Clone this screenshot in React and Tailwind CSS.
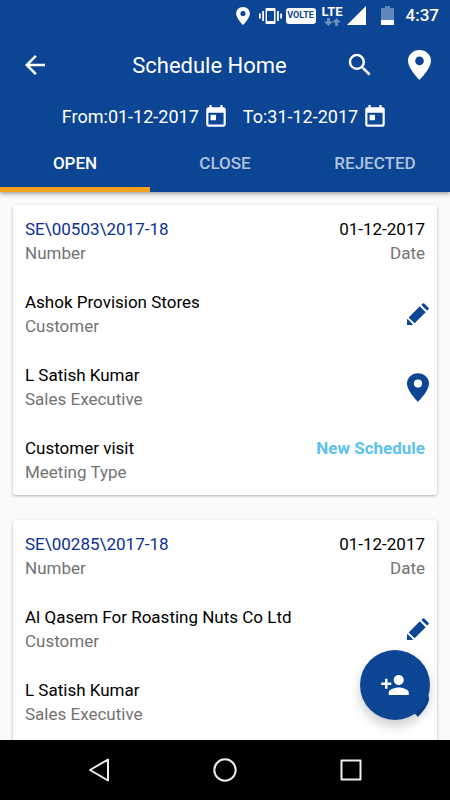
import { MdArrowBack, MdPersonAdd, MdSearch } from "react-icons/md";
import { useState } from "react";

const tabs = ["OPEN", "CLOSE", "REJECTED"];

const schedules = [
  {
    number: "SE\\00503\\2017-18",
    date: "01-12-2017",
    customer: "Ashok Provision Stores",
    executive: "L Satish Kumar",
    meetingType: "Customer visit",
    status: "New Schedule",
  },
  {
    number: "SE\\00285\\2017-18",
    date: "01-12-2017",
    customer: "Al Qasem For Roasting Nuts Co Ltd",
    executive: "L Satish Kumar",
  },
];

function IconPin({ className }) {
  return (
    <svg viewBox="0 0 23 30" className={className} fill="currentColor" aria-hidden="true">
      <path
        fillRule="evenodd"
        d="M11.5 0C5.1 0 0 4.8 0 10.8 0 18.8 11.5 30 11.5 30S23 18.8 23 10.8C23 4.8 17.9 0 11.5 0zm0 6.6a4.3 4.3 0 1 1 0 8.6 4.3 4.3 0 0 1 0-8.6z"
      />
    </svg>
  );
}

function IconPencil({ className }) {
  return (
    <svg viewBox="0 0 22 22" className={className} fill="currentColor" aria-hidden="true">
      <path d="M0 22v-5.4l.6-.6L6 21.4l-.6.6z" />
      <path d="M1.7 14.4 12.8 3.3l5.9 5.9L7.6 20.3z" />
      <path d="m14.4 1.900 1.300-1.400c.5-.5 1-.5 1.500 0l4.300 4.300c.5.5.5 1 0 1.500l-1.400 1.300z" />
    </svg>
  );
}

function IconCalendar({ className }) {
  return (
    <svg viewBox="0 0 24 24" className={className} fill="currentColor" aria-hidden="true">
      <path
        fillRule="evenodd"
        d="M19 3h-1V1h-2v2H8V1H6v2H5c-1.1 0-2 .9-2 2v14c0 1.1.9 2 2 2h14c1.1 0 2-.9 2-2V5c0-1.1-.9-2-2-2zm0 16H5V8h14v11z"
      />
      <path d="M7 10h5v5H7z" />
    </svg>
  );
}

function StatusBar() {
  return (
    <div className="flex h-8 items-center justify-end pr-[11px]">
      <IconPin className="mr-[9px] h-[18px] w-[14px]" />
      <svg viewBox="0 0 23 18" className="mr-1 h-[18px] w-[23px]" fill="currentColor" aria-hidden="true">
        <path fillRule="evenodd" d="M7.5 1h8a1 1 0 0 1 1 1v14a1 1 0 0 1-1 1h-8a1 1 0 0 1-1-1V2a1 1 0 0 1 1-1zM8 4v10h7V4z" />
        <path d="M0 6.5h1.8v5H0zM3.2 4H5v10H3.2zM18 4h1.8v10H18zM21.2 6.5H23v5h-1.8z" />
      </svg>
      <span className="mr-[6px] flex h-4 w-[30px] items-center justify-center rounded-[3px] bg-white text-[9px] font-bold text-[#0c4594]">
        VOLTE
      </span>
      <div className="mr-1 flex flex-col items-center">
        <span className="text-[13px] leading-3 font-bold">LTE</span>
        <svg viewBox="0 0 17 8" className="h-2 w-[17px] text-[#6a8ebf]" fill="currentColor" aria-hidden="true">
          <path d="M3 0h3v3.5h3L4.5 8 0 3.5h3zM11 8h3V4.5h3L12.5 0 8 4.5h3z" />
        </svg>
      </div>
      <svg viewBox="0 0 20 20" className="mr-[14px] size-5" fill="currentColor" aria-hidden="true">
        <path d="M0 19 19 0v19z" />
      </svg>
      <svg viewBox="0 0 13 20" className="mr-3 h-5 w-[13px]" fill="currentColor" aria-hidden="true">
        <path className="text-[#6188bd]" d="M4 0h5v2h4v12H0V2h4z" />
        <path d="M0 14h13v5H0z" />
      </svg>
      <span className="text-[17px] font-medium">4:37</span>
    </div>
  );
}

function DateButton({ label, date }) {
  return (
    <button className="flex items-center gap-1">
      <span>{label}:{date}</span>
      <IconCalendar className="size-[26px]" />
    </button>
  );
}

function Field({ value, label, highlight, children }) {
  return (
    <div className="flex items-center justify-between">
      <div>
        <p className={highlight ? "text-[#0a2f96]" : "text-black"}>{value}</p>
        <p className="text-[#737373]">{label}</p>
      </div>
      {children}
    </div>
  );
}

function ScheduleCard({ schedule }) {
  return (
    <article className="flex min-h-[290px] flex-col gap-[25px] rounded-[3px] bg-white px-3 pt-3 pb-[11px] text-[17px] leading-6 shadow-[0_1px_3px_rgba(0,0,0,0.3)]">
      <Field value={schedule.number} label="Number" highlight>
        <div className="text-right">
          <p className="text-black">{schedule.date}</p>
          <p className="text-[#737373]">Date</p>
        </div>
      </Field>
      <Field value={schedule.customer} label="Customer">
        <button aria-label="Edit" className="-mr-2 flex size-[30px] items-center justify-center text-[#0c4594]">
          <IconPencil className="size-[22px]" />
        </button>
      </Field>
      <Field value={schedule.executive} label="Sales Executive">
        <button aria-label="Location" className="-mr-2 flex size-[30px] items-center justify-center text-[#0c4594]">
          <IconPin className="h-[29px] w-[22px]" />
        </button>
      </Field>
      {schedule.meetingType && (
        <Field value={schedule.meetingType} label="Meeting Type">
          <p className="self-start font-bold text-[#5cc3ee]">{schedule.status}</p>
        </Field>
      )}
    </article>
  );
}

export default function App() {
  const [activeTab, setActiveTab] = useState("OPEN");

  return (
    <div className="flex h-screen flex-col bg-[#fafafa] font-[Roboto,sans-serif]">
      <header className="z-10 bg-[#0c4594] text-white shadow-[0_2px_4px_rgba(0,0,0,0.35)]">
        <StatusBar />

        <div className="flex h-[66px] items-center pr-[19px] pl-5">
          <button aria-label="Back">
            <MdArrowBack size={30} />
          </button>
          <h1 className="flex-1 pl-6 text-center text-[22px]">Schedule Home</h1>
          <button aria-label="Search" className="mr-[33px]">
            <MdSearch size={30} />
          </button>
          <button aria-label="Map">
            <IconPin className="h-[30px] w-[23px]" />
          </button>
        </div>

        <div className="flex h-[37px] items-center justify-center gap-[14px] text-lg">
          <DateButton label="From" date="01-12-2017" />
          <DateButton label="To" date="31-12-2017" />
        </div>

        <nav className="grid grid-cols-3 pt-[5px]">
          {tabs.map((tab) => (
            <button
              key={tab}
              onClick={() => setActiveTab(tab)}
              className={`h-[52px] border-b-[5px] text-[17px] font-medium ${
                tab === activeTab ? "border-[#f9a01b] text-white" : "border-transparent text-[#b0c3de]"
              }`}
            >
              {tab}
            </button>
          ))}
        </nav>
      </header>

      <div className="relative min-h-0 flex-1">
        <main className="flex h-full flex-col overflow-y-auto [scrollbar-width:none]">
          <div className="flex flex-col gap-[25px] px-[13px] py-[13px]">
            {schedules.map((schedule) => (
              <ScheduleCard key={schedule.number} schedule={schedule} />
            ))}
          </div>
        </main>

        {/* add schedule */}
        <button
          aria-label="Add schedule"
          className="absolute right-5 bottom-5 flex size-[70px] items-center justify-center rounded-full bg-[#0c4594] text-white shadow-[0_6px_12px_rgba(0,0,0,0.2)]"
        >
          <MdPersonAdd size={30} />
        </button>
      </div>

      {/* system navigation */}
      <footer className="z-10 grid h-[60px] grid-cols-3 place-items-center bg-black px-9 text-[#eeeeee]">
        <button aria-label="System back">
          <svg viewBox="0 0 24 24" className="size-6" fill="none" stroke="currentColor" strokeWidth="2" strokeLinejoin="round">
            <path d="M21 1.5v21L3 12z" />
          </svg>
        </button>
        <button aria-label="System home">
          <svg viewBox="0 0 24 24" className="size-6" fill="none" stroke="currentColor" strokeWidth="2">
            <circle cx="12" cy="12" r="10.7" />
          </svg>
        </button>
        <button aria-label="Recent apps">
          <svg viewBox="0 0 24 24" className="size-6" fill="none" stroke="currentColor" strokeWidth="2" strokeLinejoin="round">
            <path d="M2.500 2.500h19v19h-19z" />
          </svg>
        </button>
      </footer>
    </div>
  );
}
